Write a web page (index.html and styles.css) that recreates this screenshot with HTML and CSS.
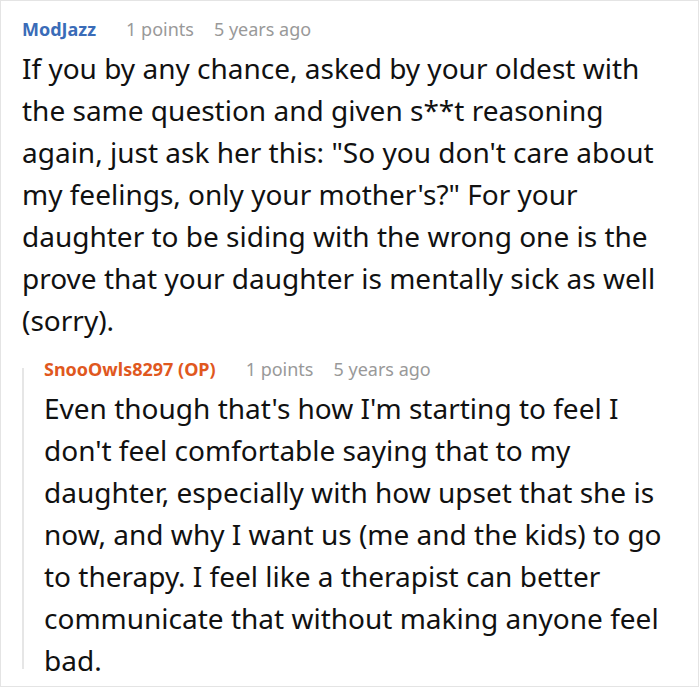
FILE: index.html
```html
<!DOCTYPE html>
<html>
<head>
<meta charset="utf-8">
<link rel="stylesheet" href="styles.css">
</head>
<body>
<div class="thread">
  <div class="comment">
    <div class="meta">
      <span class="author">ModJazz</span>
      <span class="points">1 points</span>
      <span class="time">5 years ago</span>
    </div>
    <p class="text">If you by any chance, asked by your oldest with the same question and given s**t reasoning again, just ask her this: "So you don't care about my feelings, only your mother's?" For your daughter to be siding with the wrong one is the prove that your daughter is mentally sick as well (sorry).</p>
    <div class="reply">
      <div class="meta">
        <span class="author op">SnooOwls8297 (OP)</span>
        <span class="points">1 points</span>
        <span class="time">5 years ago</span>
      </div>
      <p class="text">Even though that's how I'm starting to feel I don't feel comfortable saying that to my daughter, especially with how upset that she is now, and why I want us (me and the kids) to go to therapy. I feel like a therapist can better communicate that without making anyone feel bad.</p>
    </div>
  </div>
</div>
</body>
</html>
```
FILE: styles.css
```css
html, body {
  margin: 0;
  padding: 0;
  background: #fff;
}
body {
  font-family: "Noto Sans", "Open Sans", sans-serif;
  color: #111;
}
.thread {
  width: 697px;
  height: 685px;
  border: 1px solid #e4e4e4;
  overflow: hidden;
}
.comment {
  padding: 14px 18px 0 21px;
}
.meta {
  display: flex;
  align-items: baseline;
  font-size: 18px;
  line-height: 28px;
}
.author {
  font-weight: 700;
  color: #3a6cb8;
  margin-right: 30px;
}
.author.op {
  color: #e0581e;
}
.points {
  color: #999;
  margin-right: 20px;
}
.time {
  color: #999;
}
.text {
  margin: 0;
  font-size: 28px;
  line-height: 42px;
  padding-top: 4px;
}
.reply {
  margin-top: 14px;
  padding-left: 22px;
  background: linear-gradient(#e6e6e6, #e6e6e6) no-repeat 0 13px / 2px calc(100% - 25px);
}
```
